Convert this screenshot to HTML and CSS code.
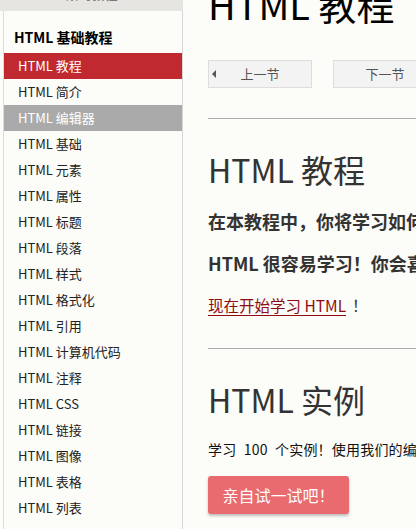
FILE: index.html
```html
<!DOCTYPE html>
<html lang="zh-CN">
<head>
<meta charset="utf-8">
<title>HTML 教程</title>
<link rel="stylesheet" href="styles.css">
</head>
<body>
<div class="page">
  <aside class="sidebar">
    <div class="side-top"><span class="side-top-text">菜鸟教程</span></div>
    <nav class="side-body">
      <h2 class="side-title">HTML 基础教程</h2>
      <a class="side-item active" href="#">HTML 教程</a>
      <a class="side-item" href="#">HTML 简介</a>
      <a class="side-item hover" href="#">HTML 编辑器</a>
      <a class="side-item" href="#">HTML 基础</a>
      <a class="side-item" href="#">HTML 元素</a>
      <a class="side-item" href="#">HTML 属性</a>
      <a class="side-item" href="#">HTML 标题</a>
      <a class="side-item" href="#">HTML 段落</a>
      <a class="side-item" href="#">HTML 样式</a>
      <a class="side-item" href="#">HTML 格式化</a>
      <a class="side-item" href="#">HTML 引用</a>
      <a class="side-item" href="#">HTML 计算机代码</a>
      <a class="side-item" href="#">HTML 注释</a>
      <a class="side-item" href="#">HTML CSS</a>
      <a class="side-item" href="#">HTML 链接</a>
      <a class="side-item" href="#">HTML 图像</a>
      <a class="side-item" href="#">HTML 表格</a>
      <a class="side-item" href="#">HTML 列表</a>
    </nav>
  </aside>
  <main class="content">
    <h1 class="page-title">HTML 教程</h1>
    <div class="pager">
      <a class="nav-btn prev" href="#"><span class="arrow-left"></span><span class="nav-label">上一节</span></a>
      <a class="nav-btn next" href="#"><span class="nav-label">下一节</span><span class="arrow-right"></span></a>
    </div>
    <hr class="rule">
    <h2 class="section-title">HTML 教程</h2>
    <p class="lead">在本教程中，你将学习如何使用 HTML 来创建站点。</p>
    <p class="lead">HTML 很容易学习！你会喜欢它的！</p>
    <p class="start"><a class="start-link" href="#">现在开始学习 HTML</a><span class="bang">！</span></p>
    <hr class="rule rule-2">
    <h2 class="section-title">HTML 实例</h2>
    <p class="text">学习 100 个实例！使用我们的编辑器，您可以在线编辑 HTML，然后点击按钮查看结果。</p>
    <a class="try-btn" href="#">亲自试一试吧！</a>
  </main>
</div>
</body>
</html>
```
FILE: styles.css
```css
html, body {
  margin: 0;
  padding: 0;
  background: #fcfcf8;
}
body {
  font-family: "Noto Sans CJK SC", "Open Sans", sans-serif;
  color: #222;
}
a { text-decoration: none; }

.page {
  display: flex;
  width: 416px;
  height: 529px;
  overflow: hidden;
}

/* sidebar */
.sidebar {
  width: 183px;
  flex: none;
  display: flex;
  flex-direction: column;
}
.side-top {
  height: 11px;
  flex: none;
  background: #e6e5e1;
  overflow: hidden;
  text-align: center;
}
.side-top-text {
  display: block;
  margin-top: -14px;
  font-size: 13px;
  line-height: 15px;
  font-weight: bold;
  color: #777;
}
.side-body {
  flex: 1;
  margin-left: 3px;
  border-left: 1px solid #dcdcdc;
  border-right: 1px solid #d6d6d6;
  display: flex;
  flex-direction: column;
}
.side-title {
  margin: 0;
  padding: 15px 0 4px 10px;
  font-size: 14px;
  line-height: 23px;
  font-weight: bold;
  color: #000;
}
.side-item {
  display: block;
  height: 26px;
  line-height: 26px;
  padding-left: 14px;
  font-size: 13px;
  color: #222;
  flex: none;
}
.side-item.active {
  background: #c0292f;
  color: #fff;
}
.side-item.hover {
  background: #aaaaaa;
  color: #fff;
}

/* content */
.content {
  flex: none;
  width: 700px;
  padding-left: 25px;
}
.page-title {
  margin: -16px 0 0;
  font-size: 38px;
  line-height: 40px;
  font-weight: normal;
  color: #000;
}
.pager {
  display: flex;
  gap: 21px;
  margin-top: 36px;
}
.nav-btn {
  box-sizing: border-box;
  width: 104px;
  height: 28px;
  padding: 0 3px;
  border: 1px solid #dddddd;
  background: #f3f3f3;
  color: #555;
  font-size: 13px;
  display: grid;
  grid-template-columns: 8px 1fr 8px;
  align-items: center;
}
.nav-label {
  grid-column: 2;
  text-align: center;
  line-height: 26px;
}
.arrow-left {
  grid-column: 1;
  grid-row: 1;
  justify-self: start;
  width: 0;
  height: 0;
  border-top: 4px solid transparent;
  border-bottom: 4px solid transparent;
  border-right: 4px solid #555;
}
.arrow-right {
  grid-column: 3;
  grid-row: 1;
  justify-self: end;
  width: 0;
  height: 0;
  border-top: 4px solid transparent;
  border-bottom: 4px solid transparent;
  border-left: 4px solid #555;
}
.rule {
  margin: 30px 0 0;
  height: 0;
  border: 0;
  border-top: 1px solid #acacac;
}
.section-title {
  margin: 30px 0 0;
  font-size: 32px;
  line-height: 40px;
  font-weight: normal;
  color: #333;
}
.lead {
  margin: 19px 0 0;
  font-size: 18px;
  line-height: 26px;
  font-weight: bold;
  color: #333;
  white-space: nowrap;
}
.lead + .lead { margin-top: 16px; }
.start {
  margin: 16px 0 0;
  font-size: 15.5px;
  line-height: 26px;
  color: #333;
}
.start-link {
  color: #8f0b10;
  text-decoration: underline;
  text-underline-offset: 3px;
}
.bang {
  margin-left: 6px;
}
.rule-2 { margin-top: 30px; }
.text {
  margin: 18px 0 0;
  font-size: 14px;
  line-height: 24px;
  color: #111;
  white-space: nowrap;
  word-spacing: 4px;
  letter-spacing: 0.2px;
}
.try-btn {
  display: inline-flex;
  align-items: center;
  justify-content: center;
  margin-top: 15px;
  width: 141px;
  height: 38px;
  box-sizing: border-box;
  background: #e96b6f;
  color: #fff;
  font-size: 16px;
  border-radius: 3px;
  box-shadow: 0 2px 3px rgba(0, 0, 0, 0.25);
}
```
